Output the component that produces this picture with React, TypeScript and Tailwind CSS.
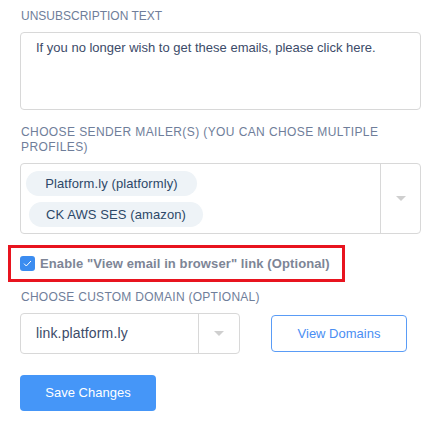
const Chip = ({ label, className }: { label: string; className: string }) => (
  <span
    className={`inline-flex h-[25px] items-center justify-center rounded-full bg-[#eef3f7] text-[13px] tracking-[0.1px] text-[#2d4868] ${className}`}
  >
    {label}
  </span>
);

const Caret = () => (
  <svg width="10" height="5" viewBox="0 0 10 5">
    <path d="M0 0h10L5 5z" fill="#cfcfcf" />
  </svg>
);

export default function App() {
  return (
    <div className="min-h-screen w-[439px] bg-white pl-[20px] pt-[9px] font-['Liberation_Sans',Arial,sans-serif]">
      <div className="w-[401px]">
        <p className="pl-px text-[12px] leading-[15px] text-[#6f7e9a]">UNSUBSCRIPTION TEXT</p>
        <div className="mt-[8px] h-[78px] rounded-[4px] border border-[#d8d8d8] px-[15px] pt-[7px] text-[13px] leading-[16px] text-[#3c4b69]">
          If you no longer wish to get these emails, please click here.
        </div>

        <p className="mt-[15px] pl-px text-[12px] leading-[15px] tracking-[0.4px] text-[#6f7e9a]">
          CHOOSE SENDER MAILER(S) (YOU CAN CHOSE MULTIPLE PROFILES)
        </p>
        <div className="mt-[8px] flex h-[71px] rounded-[4px] border border-[#d8d8d8]">
          <div className="flex flex-1 flex-col items-start gap-[6px] pt-[7px]">
            <Chip label="Platform.ly (platformly)" className="ml-[5px] w-[171px]" />
            <Chip label="CK AWS SES (amazon)" className="ml-[8px] w-[174px]" />
          </div>
          <div className="flex w-[40px] items-center justify-center border-l border-[#d8d8d8]">
            <Caret />
          </div>
        </div>

        <div className="-ml-[12px] mt-[11px] flex h-[37px] w-[337px] items-center gap-[5px] border-[3px] border-[#e8141f] pl-[9px]">
          <span className="flex h-[15px] w-[15px] items-center justify-center rounded-[3px] bg-[#3b8cf0]">
            <svg width="9" height="7" viewBox="0 0 9 7">
              <path d="M1 3.6 3.3 6 8 1" fill="none" stroke="#fff" strokeWidth="1" />
            </svg>
          </span>
          <span className="text-[13px] font-bold tracking-[0.1px] text-[#7d8596]">
            Enable "View email in browser" link (Optional)
          </span>
        </div>

        <p className="mt-[8px] pl-px text-[12px] leading-[15px] tracking-[0.27px] text-[#6f7e9a]">
          CHOOSE CUSTOM DOMAIN (OPTIONAL)
        </p>
        <div className="mt-[8px] flex items-center gap-[31px]">
          <div className="flex h-[41px] w-[220px] rounded-[4px] border border-[#d8d8d8]">
            <div className="flex flex-1 items-center pl-[15px] text-[14px] tracking-[0.15px] text-[#3c4b69]">
              link.platform.ly
            </div>
            <div className="flex w-[41px] items-center justify-center border-l border-[#d8d8d8]">
              <Caret />
            </div>
          </div>
          <button className="h-[37px] w-[136px] rounded-[4px] border border-[#5a9cf6] bg-white text-[13px] text-[#4a8ef3]">
            View Domains
          </button>
        </div>

        <button className="mt-[21px] h-[36px] w-[136px] rounded-[4px] bg-[#4596f8] text-[13px] text-white">
          Save Changes
        </button>
      </div>
    </div>
  );
}
